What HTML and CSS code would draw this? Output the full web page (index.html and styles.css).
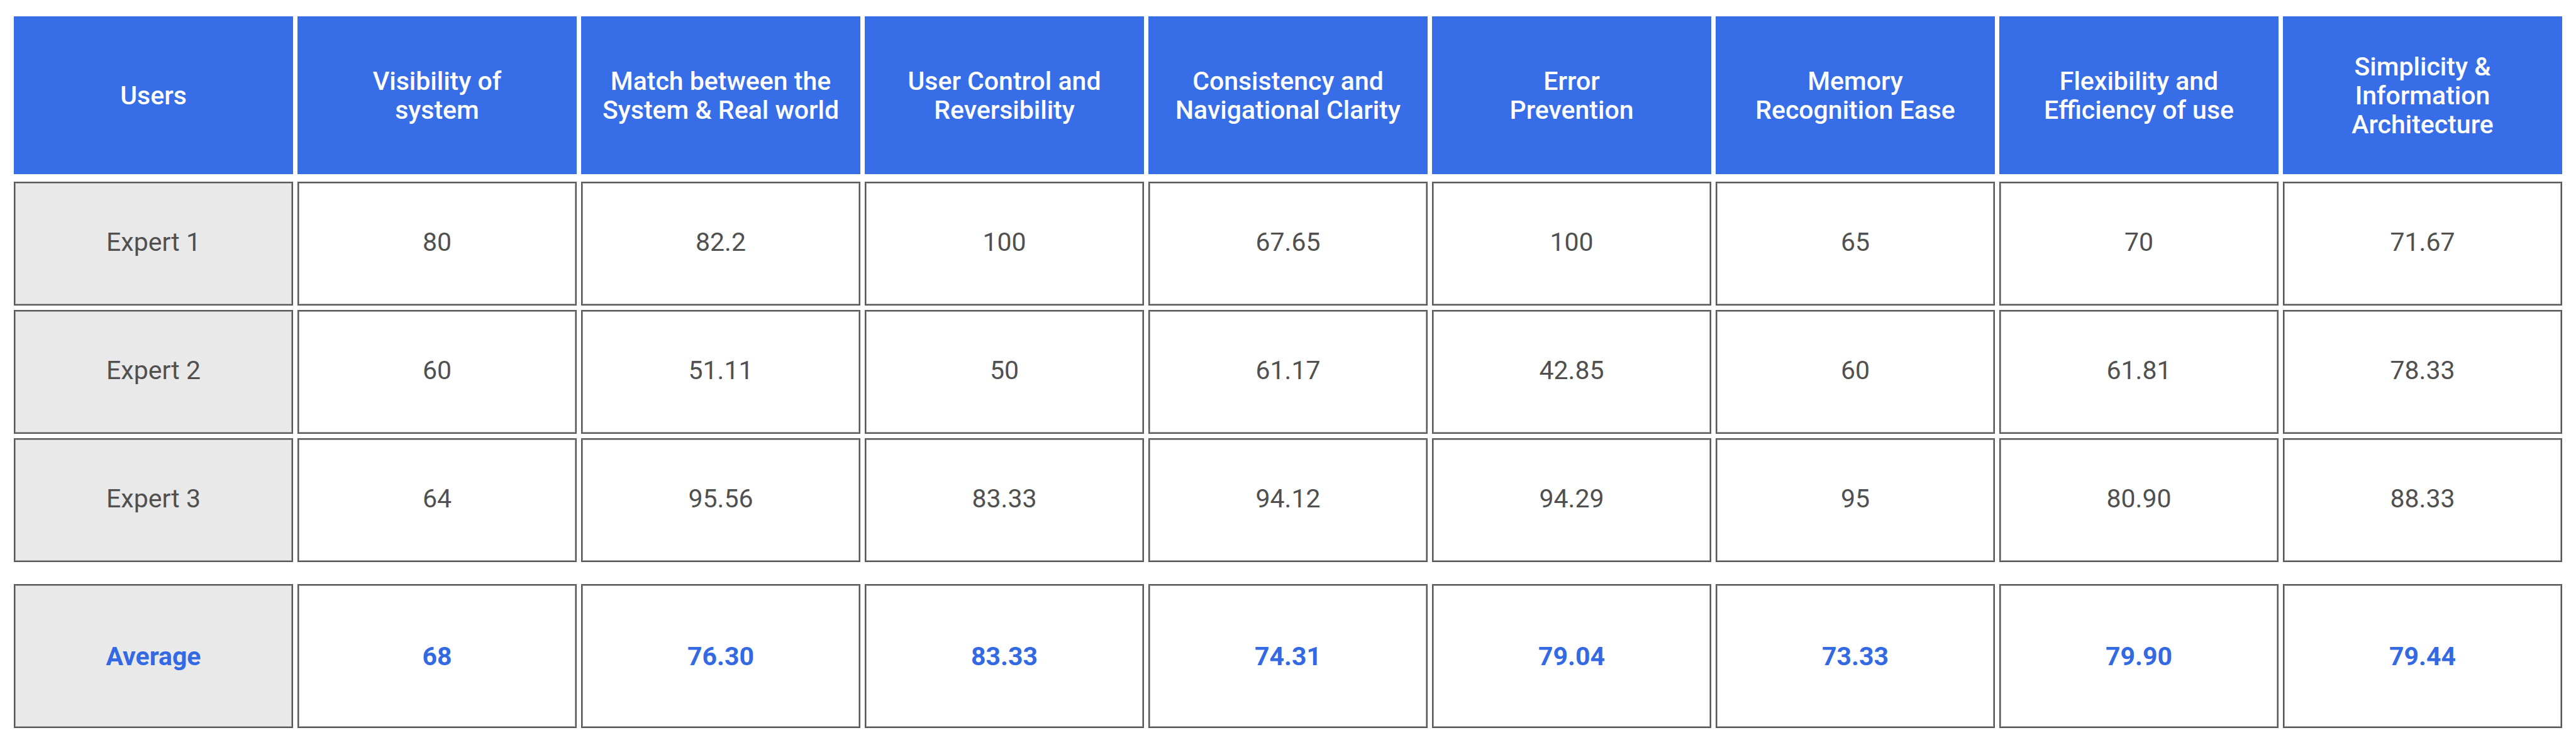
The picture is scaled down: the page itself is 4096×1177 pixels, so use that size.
FILE: index.html
```html
<!DOCTYPE html>
<html lang="en">
<head>
<meta charset="utf-8">
<title>Heuristic evaluation scores</title>
<link rel="stylesheet" href="styles.css">
</head>
<body>
<div class="table">
  <div class="row head">
    <div class="cell">Users</div>
    <div class="cell">Visibility of<br>system</div>
    <div class="cell">Match between the<br>System &amp; Real world</div>
    <div class="cell">User Control and<br>Reversibility</div>
    <div class="cell">Consistency and<br>Navigational Clarity</div>
    <div class="cell">Error<br>Prevention</div>
    <div class="cell">Memory<br>Recognition Ease</div>
    <div class="cell">Flexibility and<br>Efficiency of use</div>
    <div class="cell">Simplicity &amp;<br>Information<br>Architecture</div>
  </div>
  <div class="row data">
    <div class="cell user">Expert 1</div>
    <div class="cell">80</div>
    <div class="cell">82.2</div>
    <div class="cell">100</div>
    <div class="cell">67.65</div>
    <div class="cell">100</div>
    <div class="cell">65</div>
    <div class="cell">70</div>
    <div class="cell">71.67</div>
  </div>
  <div class="row data">
    <div class="cell user">Expert 2</div>
    <div class="cell">60</div>
    <div class="cell">51.11</div>
    <div class="cell">50</div>
    <div class="cell">61.17</div>
    <div class="cell">42.85</div>
    <div class="cell">60</div>
    <div class="cell">61.81</div>
    <div class="cell">78.33</div>
  </div>
  <div class="row data">
    <div class="cell user">Expert 3</div>
    <div class="cell">64</div>
    <div class="cell">95.56</div>
    <div class="cell">83.33</div>
    <div class="cell">94.12</div>
    <div class="cell">94.29</div>
    <div class="cell">95</div>
    <div class="cell">80.90</div>
    <div class="cell">88.33</div>
  </div>
  <div class="row data avg">
    <div class="cell user">Average</div>
    <div class="cell">68</div>
    <div class="cell">76.30</div>
    <div class="cell">83.33</div>
    <div class="cell">74.31</div>
    <div class="cell">79.04</div>
    <div class="cell">73.33</div>
    <div class="cell">79.90</div>
    <div class="cell">79.44</div>
  </div>
</div>
</body>
</html>
```

FILE: styles.css
```css
html, body {
  margin: 0;
  background: #ffffff;
}

body {
  padding: 26px 22px 0 22px;
  font-family: Roboto, "Liberation Sans", Arial, sans-serif;
}

.table {
  display: flex;
  flex-direction: column;
  gap: 7px;
}

.row {
  display: grid;
  grid-template-columns: repeat(9, 1fr);
  column-gap: 7px;
}

.cell {
  box-sizing: border-box;
  display: flex;
  align-items: center;
  justify-content: center;
  text-align: center;
  font-size: 41px;
  line-height: 46px;
}

.head {
  height: 251px;
  margin-bottom: 5px;
}

.head .cell {
  background: #376ee8;
  color: #ffffff;
  font-weight: 500;
  padding: 0 12px;
}

.data {
  height: 197px;
}

.data .cell {
  background: #ffffff;
  color: #505050;
  border: 2px solid #595959;
  box-shadow: inset 0 0 0 1px #a3a3a3;
  font-weight: 400;
  padding-bottom: 6px;
}

.data .cell.user {
  background: #e9e9e9;
}

.avg {
  height: 229px;
  margin-top: 28px;
}

.avg .cell {
  color: #3469e4;
  font-weight: 700;
  padding-bottom: 0;
}
```
